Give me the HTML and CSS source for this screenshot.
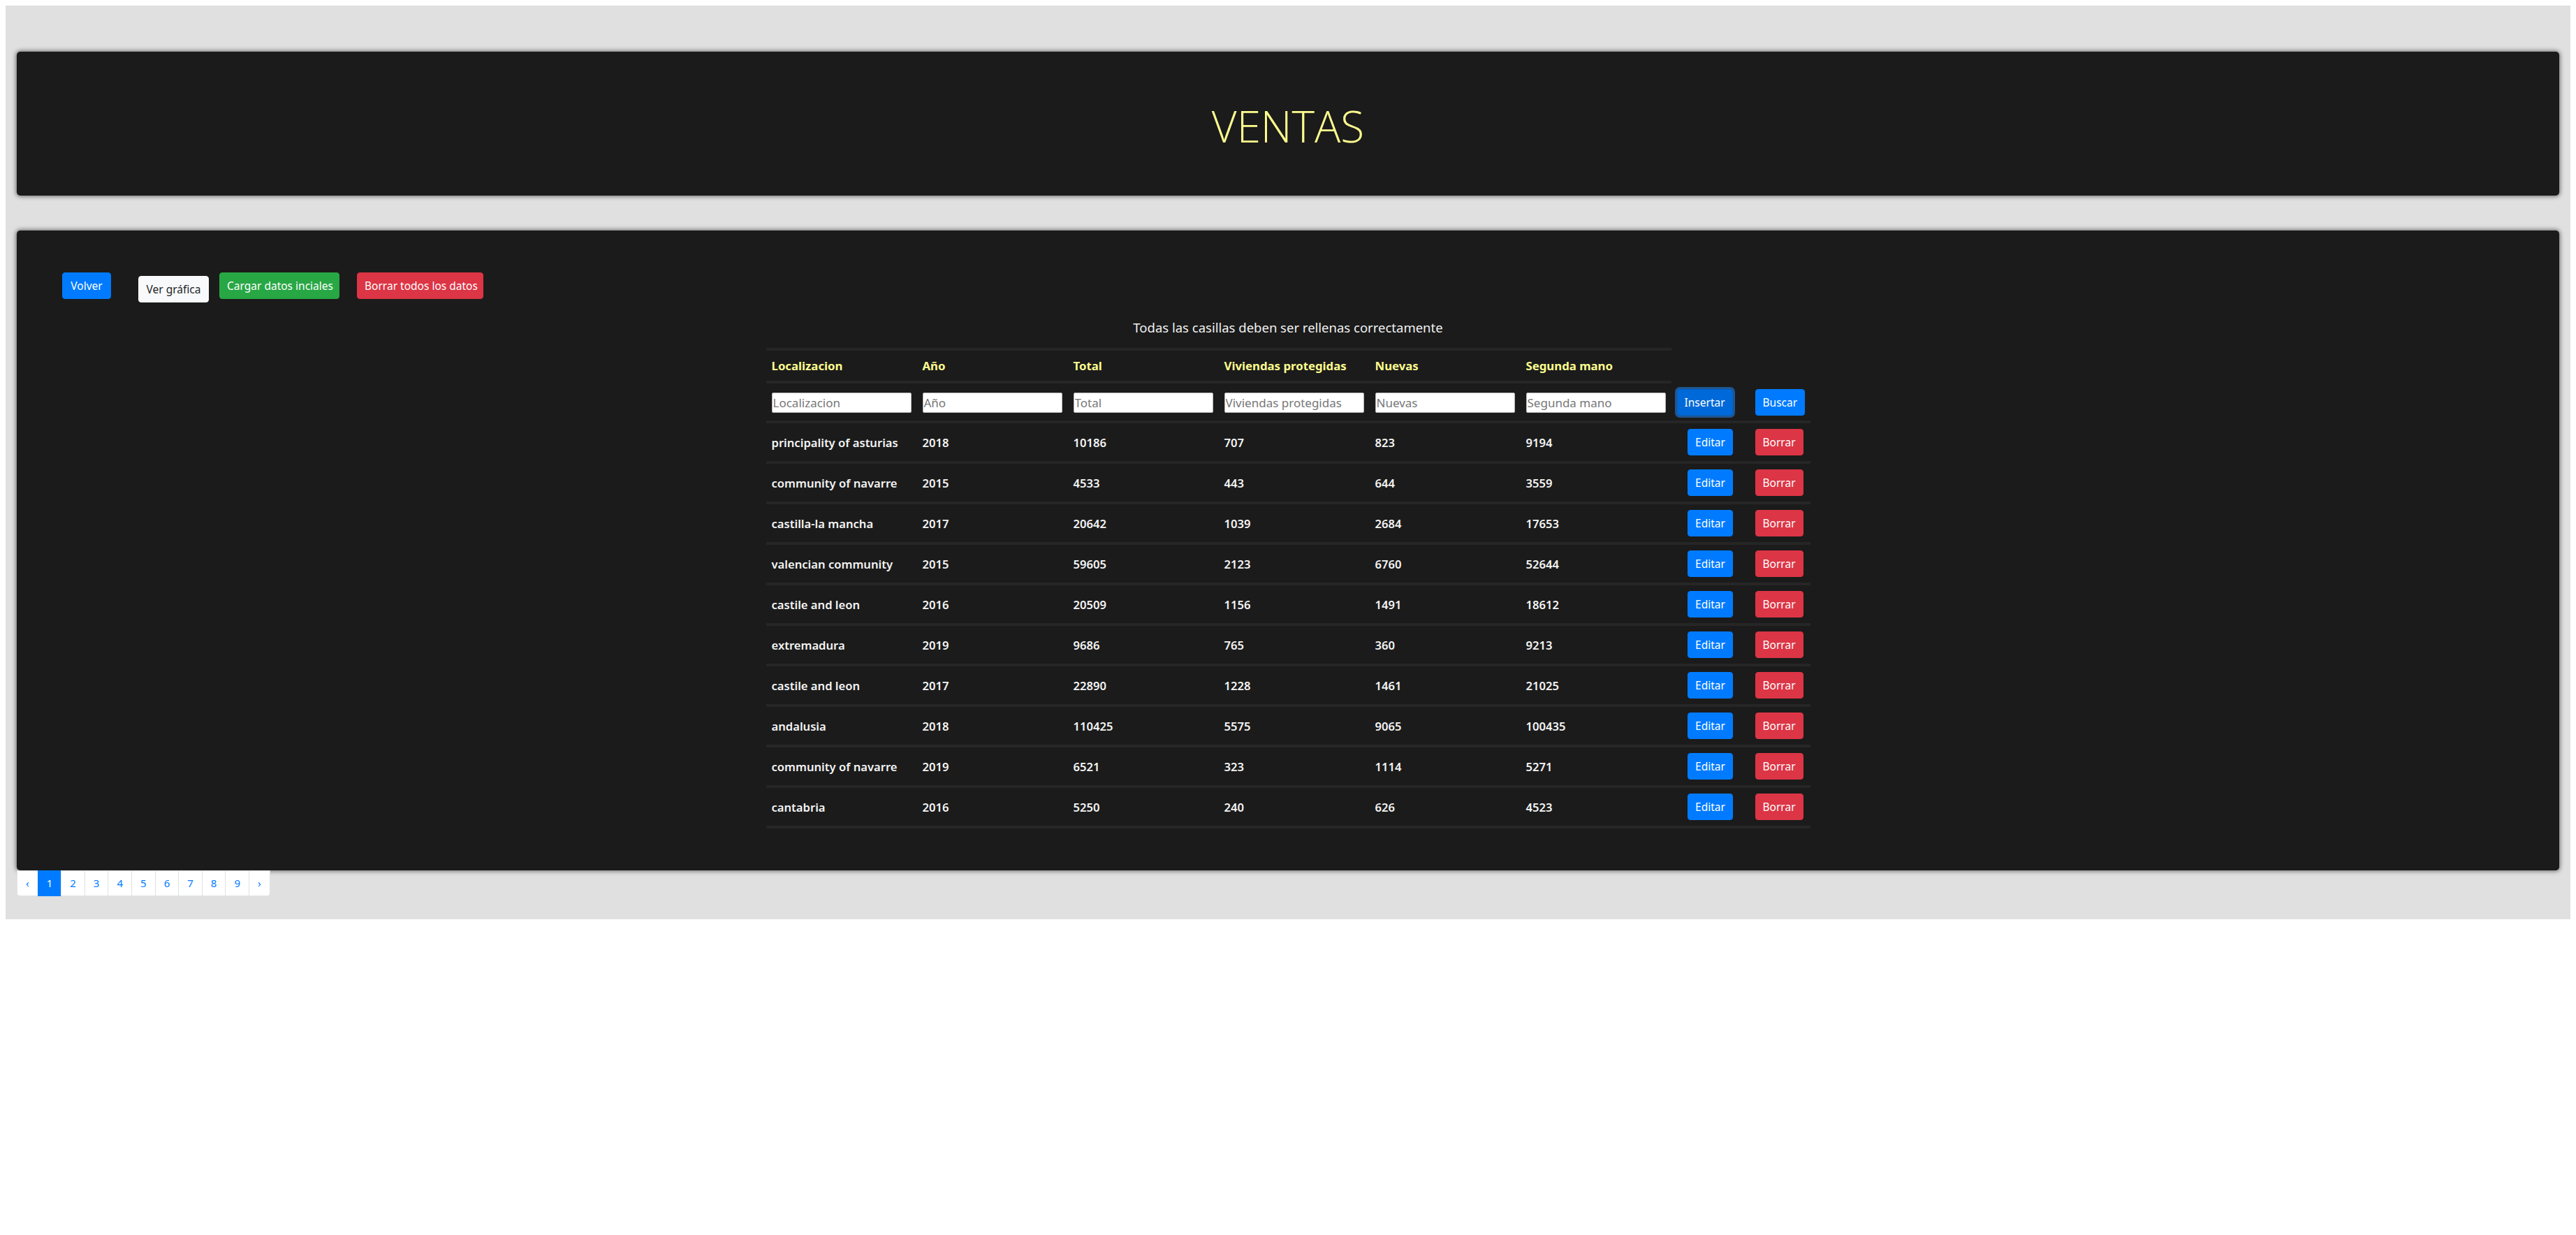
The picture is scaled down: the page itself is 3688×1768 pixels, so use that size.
FILE: index.html
```html
<!DOCTYPE html>
<html lang="es">
<head>
<meta charset="utf-8">
<title>Ventas</title>
<link rel="stylesheet" href="styles.css">
</head>
<body>
<div class="page">
  <header class="card header-card">
    <h1 class="title">VENTAS</h1>
  </header>

  <main class="card main-card">
    <div class="toolbar">
      <button class="btn btn-primary btn-volver">Volver</button>
      <button class="btn btn-light btn-grafica">Ver gráfica</button>
      <button class="btn btn-success btn-cargar">Cargar datos inciales</button>
      <button class="btn btn-danger btn-borrar-todo">Borrar todos los datos</button>
    </div>

    <p class="caption">Todas las casillas deben ser rellenas correctamente</p>

    <table class="data-table">
      <colgroup>
        <col class="c-data"><col class="c-data"><col class="c-data"><col class="c-data"><col class="c-data"><col class="c-data">
        <col class="c-act1"><col class="c-act2">
      </colgroup>
      <thead>
        <tr>
          <th>Localizacion</th>
          <th>Año</th>
          <th>Total</th>
          <th>Viviendas protegidas</th>
          <th>Nuevas</th>
          <th>Segunda mano</th>
        </tr>
      </thead>
      <tbody>
        <tr class="input-row">
          <td><input class="field" placeholder="Localizacion"></td>
          <td><input class="field" placeholder="Año"></td>
          <td><input class="field" placeholder="Total"></td>
          <td><input class="field" placeholder="Viviendas protegidas"></td>
          <td><input class="field" placeholder="Nuevas"></td>
          <td><input class="field" placeholder="Segunda mano"></td>
          <td><button class="btn btn-primary btn-focus">Insertar</button></td>
          <td><button class="btn btn-primary">Buscar</button></td>
        </tr>
        <tr><td>principality of asturias</td><td>2018</td><td>10186</td><td>707</td><td>823</td><td>9194</td><td class="act-edit"><button class="btn btn-primary">Editar</button></td><td><button class="btn btn-danger">Borrar</button></td></tr>
        <tr><td>community of navarre</td><td>2015</td><td>4533</td><td>443</td><td>644</td><td>3559</td><td class="act-edit"><button class="btn btn-primary">Editar</button></td><td><button class="btn btn-danger">Borrar</button></td></tr>
        <tr><td>castilla-la mancha</td><td>2017</td><td>20642</td><td>1039</td><td>2684</td><td>17653</td><td class="act-edit"><button class="btn btn-primary">Editar</button></td><td><button class="btn btn-danger">Borrar</button></td></tr>
        <tr><td>valencian community</td><td>2015</td><td>59605</td><td>2123</td><td>6760</td><td>52644</td><td class="act-edit"><button class="btn btn-primary">Editar</button></td><td><button class="btn btn-danger">Borrar</button></td></tr>
        <tr><td>castile and leon</td><td>2016</td><td>20509</td><td>1156</td><td>1491</td><td>18612</td><td class="act-edit"><button class="btn btn-primary">Editar</button></td><td><button class="btn btn-danger">Borrar</button></td></tr>
        <tr><td>extremadura</td><td>2019</td><td>9686</td><td>765</td><td>360</td><td>9213</td><td class="act-edit"><button class="btn btn-primary">Editar</button></td><td><button class="btn btn-danger">Borrar</button></td></tr>
        <tr><td>castile and leon</td><td>2017</td><td>22890</td><td>1228</td><td>1461</td><td>21025</td><td class="act-edit"><button class="btn btn-primary">Editar</button></td><td><button class="btn btn-danger">Borrar</button></td></tr>
        <tr><td>andalusia</td><td>2018</td><td>110425</td><td>5575</td><td>9065</td><td>100435</td><td class="act-edit"><button class="btn btn-primary">Editar</button></td><td><button class="btn btn-danger">Borrar</button></td></tr>
        <tr><td>community of navarre</td><td>2019</td><td>6521</td><td>323</td><td>1114</td><td>5271</td><td class="act-edit"><button class="btn btn-primary">Editar</button></td><td><button class="btn btn-danger">Borrar</button></td></tr>
        <tr><td>cantabria</td><td>2016</td><td>5250</td><td>240</td><td>626</td><td>4523</td><td class="act-edit"><button class="btn btn-primary">Editar</button></td><td><button class="btn btn-danger">Borrar</button></td></tr>
      </tbody>
    </table>
  </main>

  <nav class="pagination">
    <a class="page-item">‹</a>
    <a class="page-item active">1</a>
    <a class="page-item">2</a>
    <a class="page-item">3</a>
    <a class="page-item">4</a>
    <a class="page-item">5</a>
    <a class="page-item">6</a>
    <a class="page-item">7</a>
    <a class="page-item">8</a>
    <a class="page-item">9</a>
    <a class="page-item">›</a>
  </nav>
</div>
</body>
</html>
```

FILE: styles.css
```css
body {
  margin: 8px;
  font-family: "Noto Sans", "Open Sans", sans-serif;
  background: #ffffff;
}

.page {
  background: #e0e0e0;
  padding: 66px 16px 33px;
}

.card {
  background: #1b1b1b;
  border-radius: 5px;
  box-shadow: 0 0 6px 1px rgba(0, 0, 0, 0.55);
}

.header-card {
  height: 206px;
  display: flex;
  align-items: center;
  justify-content: center;
  margin-bottom: 50px;
}

.title {
  margin: 6px 0 0;
  font-family: "Open Sans", "Noto Sans", sans-serif;
  font-weight: 300;
  font-size: 62px;
  line-height: 1;
  color: #fdfc8f;
}

.main-card {
  height: 916px;
  box-sizing: border-box;
  padding: 60px 65px 60px;
  display: flex;
  flex-direction: column;
  align-items: center;
}

.toolbar {
  align-self: stretch;
  display: flex;
  align-items: flex-start;
  height: 43px;
  margin-bottom: 22px;
}

.btn {
  height: 38px;
  box-sizing: border-box;
  padding: 0 10px;
  border: 1px solid transparent;
  border-radius: 4px;
  font-family: "Noto Sans", "Open Sans", sans-serif;
  font-size: 15.5px;
  line-height: 36px;
  color: #fff;
  cursor: pointer;
  white-space: nowrap;
}

.btn-primary { background: #007bff; border-color: #007bff; }
.btn-success { background: #28a745; border-color: #28a745; }
.btn-danger { background: #dc3545; border-color: #dc3545; }
.btn-light { background: #f8f9fa; border-color: #f8f9fa; color: #212529; }

.btn-focus {
  background: #0069d9;
  border-color: #0062cc;
  box-shadow: 0 0 0 3px rgba(38, 143, 255, 0.5);
}

.btn-volver { width: 70px; }
.btn-grafica { width: 101px; margin-left: 39px; margin-top: 5px; }
.btn-cargar { width: 172px; margin-left: 15px; }
.btn-borrar-todo { width: 181px; margin-left: 25px; }

.caption {
  margin: 0 0 16px;
  font-size: 18.5px;
  line-height: 27px;
  color: #f0f0f0;
}

.data-table {
  border-collapse: separate;
  border-spacing: 0;
  table-layout: fixed;
  width: 1495px;
  color: #f4f4f4;
  font-size: 16.6px;
}

.c-data { width: 216px; }
.c-act1 { width: 112px; }
.c-act2 { width: 87px; }

.data-table th {
  text-align: left;
  font-weight: 700;
  font-size: 16.8px;
  color: #fdfc8f;
  padding: 8px 8px;
  line-height: 27px;
  border-top: 4px solid #262626;
  border-bottom: 4px solid #262626;
  white-space: nowrap;
}

.data-table td {
  padding: 8px 8px;
  line-height: 27px;
  font-weight: 600;
  border-bottom: 4px solid #262626;
  vertical-align: middle;
  white-space: nowrap;
}

.data-table .input-row td {
  padding: 8px 8px 7px;
}

.data-table td .btn {
  display: block;
}

.act-edit .btn {
  margin: 0 auto;
}

.field {
  display: block;
  width: 200px;
  height: 29px;
  box-sizing: border-box;
  margin: 0;
  padding: 0 1px;
  border: 1px solid #b5b5b5;
  border-radius: 2px;
  background: #ffffff;
  font-family: "Noto Sans", "Open Sans", sans-serif;
  font-size: 17px;
  color: #333;
}

.field::placeholder {
  color: #777;
}

.pagination {
  display: flex;
  width: max-content;
}

.page-item {
  display: block;
  height: 37px;
  box-sizing: border-box;
  padding: 0 12px;
  line-height: 35px;
  font-size: 15px;
  color: #007bff;
  background: #fff;
  border: 1px solid #dee2e6;
  margin-left: -1px;
  text-decoration: none;
}

.page-item:first-child {
  margin-left: 0;
  border-radius: 0 0 0 4px;
}

.page-item:last-child {
  border-radius: 0 0 4px 0;
}

.page-item.active {
  background: #007bff;
  border-color: #007bff;
  color: #fff;
}
```
